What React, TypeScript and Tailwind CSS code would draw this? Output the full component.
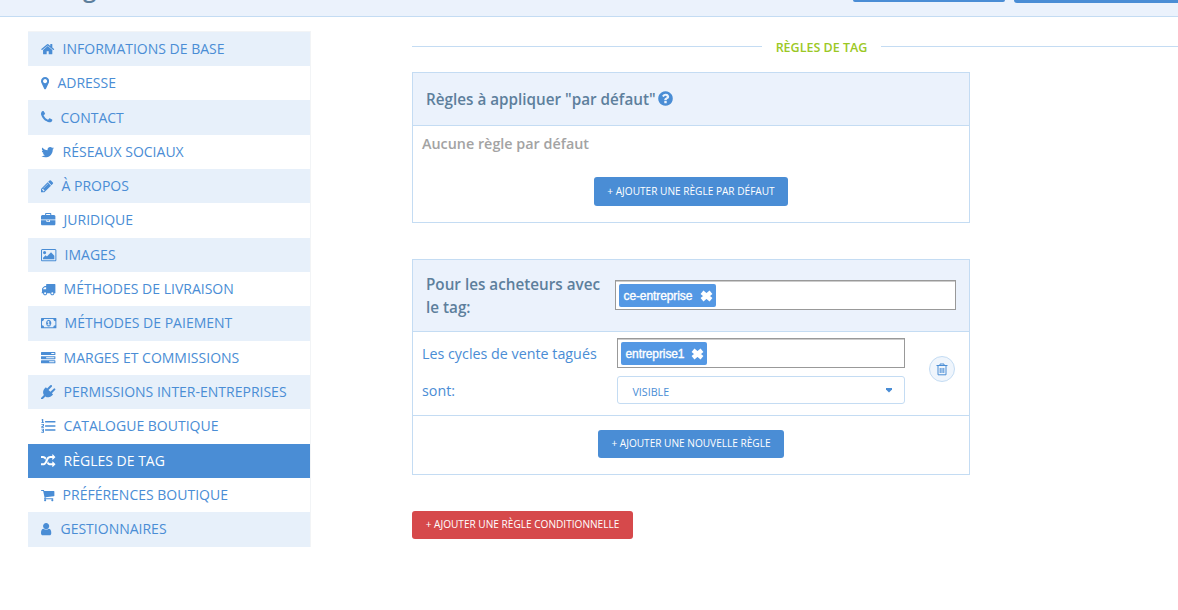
import type { ReactNode } from 'react';

type Glyph = { box: string; w: string; d: string };

// Icon outlines on a 1792-unit em, cropped to each glyph's own advance width.
const glyphs: Record<string, Glyph> = {
  home: { box: '64 0 1664 1792', w: 'w-[13.4px]', d: 'M1472 992v480q0 26-19 45t-45 19h-384v-384h-256v384h-384q-26 0-45-19t-19-45v-480q0-1 .5-3t.5-3l575-474 575 474q1 2 1 6zm223-69l-62 74q-8 9-21 11h-3q-13 0-21-7l-692-577-692 577q-12 8-24 7-13-2-21-11l-62-74q-8-10-7-23.5t11-21.5l719-599q32-26 76-26t76 26l244 204v-195q0-14 9-23t23-9h192q14 0 23 9t9 23v408l219 182q10 8 11 21.5t-7 23.5z' },
  marker: { box: '384 0 1024 1792', w: 'w-[8.2px]', d: 'M1152 640q0-106-75-181t-181-75-181 75-75 181 75 181 181 75 181-75 75-181zm256 0q0 109-33 179l-364 774q-16 33-47.5 52t-67.5 19-67.5-19-46.5-52l-365-774q-33-70-33-179 0-212 150-362t362-150 362 150 150 362z' },
  phone: { box: '192 0 1408 1792', w: 'w-[11.3px]', d: 'M1600 1240q0 27-10 70.5t-21 68.5q-21 50-122 106-94 51-186 51-27 0-53-3.5t-57.5-12.5-47-14.5-55.5-20.5-49-18q-98-35-175-83-127-79-264-216t-216-264q-48-77-83-175-3-9-18-49t-20.5-55.5-14.5-47-12.5-57.5-3.5-53q0-92 51-186 56-101 106-122 25-11 68.5-21t70.5-10q14 0 21 3 18 6 53 76 11 19 30 54t35 63.5 31 53.5q3 4 17.5 25t21.5 35.5 7 28.5q0 20-28.5 50t-62 55-62 53-28.5 46q0 9 5 22.5t8.5 20.5 14 24 11.5 19q76 137 174 235t235 174q2 1 19 11.5t24 14 20.5 8.5 22.5 5q18 0 46-28.5t53-62 55-62 50-28.5q14 0 28.5 7t35.5 21.5 25 17.5q25 15 53.5 31t63.5 35 54 30q70 35 76 53 3 7 3 21z' },
  twitter: { box: '64 0 1664 1792', w: 'w-[13.4px]', d: 'M1684 408q-67 98-162 167 1 14 1 42 0 130-38 259.5t-115.5 248.5-184.5 210.5-258 146-323 54.5q-271 0-496-145 35 4 78 4 225 0 401-138-105-2-188-64.5t-114-159.5q33 5 61 5 43 0 85-11-112-23-185.5-111.5t-73.5-205.5v-4q68 38 146 41-66-44-105-115t-39-154q0-88 44-163 121 149 294.5 238.5t371.5 99.5q-8-38-8-74 0-134 94.5-228.5t228.5-94.5q140 0 236 102 109-21 205-78-37 115-142 178 93-10 186-50z' },
  pencil: { box: '128 0 1536 1792', w: 'w-[12.3px]', d: 'M491 1536l91-91-235-235-91 91v107h128v128h107zm523-928q0-22-22-22-10 0-17 7l-542 542q-7 7-7 17 0 22 22 22 10 0 17-7l542-542q7-7 7-17zm-54-192l416 416-832 832h-416v-416zm683 96q0 53-37 90l-166 166-416-416 166-165q36-38 90-38 53 0 91 38l235 234q37 39 37 91z' },
  briefcase: { box: '0 0 1792 1792', w: 'w-[14.4px]', d: 'M640 256h512v-128h-512v128zm1152 640v480q0 66-47 113t-113 47h-1472q-66 0-113-47t-47-113v-480h672v160q0 26 19 45t45 19h320q26 0 45-19t19-45v-160h672zm-768 0v128h-256v-128h256zm768-480v384h-1792v-384q0-66 47-113t113-47h352v-160q0-40 28-68t68-28h576q40 0 68 28t28 68v160h352q66 0 113 47t47 113z' },
  image: { box: '-64 0 1920 1792', w: 'w-[15.4px]', d: 'M576 576q0 80-56 136t-136 56-136-56-56-136 56-136 136-56 136 56 56 136zm1024 384v448h-1408v-192l320-320 160 160 512-512zm96-704h-1600q-13 0-22.5 9.5t-9.5 22.5v1216q0 13 9.5 22.5t22.5 9.5h1600q13 0 22.5-9.5t9.5-22.5v-1216q0-13-9.5-22.5t-22.5-9.5zm160 32v1216q0 66-47 113t-113 47h-1600q-66 0-113-47t-47-113v-1216q0-66 47-113t113-47h1600q66 0 113 47t47 113z' },
  truck: { box: '0 0 1792 1792', w: 'w-[14.4px]', d: 'M640 1408q0-52-38-90t-90-38-90 38-38 90 38 90 90 38 90-38 38-90zm-384-512h384v-256h-158q-13 0-22 9l-195 195q-9 9-9 22v30zm1280 512q0-52-38-90t-90-38-90 38-38 90 38 90 90 38 90-38 38-90zm256-1088v1024q0 15-4 26.5t-13.5 18.5-16.5 11.5-23.5 6-22.5 2-25.5 0-22.5-.5q0 106-75 181t-181 75-181-75-75-181h-384q0 106-75 181t-181 75-181-75-75-181h-64q-3 0-22.5.5t-25.5 0-22.5-2-23.5-6-16.5-11.5-13.5-18.5-4-26.5q0-26 19-45t45-19v-320q0-8-.5-35t0-38 2.5-34.5 6.5-37 14-30.5 22.5-30l198-198q19-19 50.5-32t58.5-13h160v-192q0-26 19-45t45-19h1024q26 0 45 19t19 45z' },
  money: { box: '0 0 1920 1792', w: 'w-[15.4px]', d: 'M768 1152h384v-96h-128v-448h-114l-148 137 77 80q42-37 55-57h2v288h-128v96zm512-256q0 70-21 142t-59.5 134-101.5 101-138 39-138-39-101.5-101-59.5-134-21-142 21-142 59.5-134 101.5-101 138-39 138 39 101.5 101 59.5 134 21 142zm512 256v-512q-106 0-181-75t-75-181h-1152q0 106-75 181t-181 75v512q106 0 181 75t75 181h1152q0-106 75-181t181-75zm128-832v1152q0 26-19 45t-45 19h-1792q-26 0-45-19t-19-45v-1152q0-26 19-45t45-19h1792q26 0 45 19t19 45z' },
  tasks: { box: '0 0 1792 1792', w: 'w-[14.4px]', d: 'M1024 1408h640v-128h-640v128zm-384-512h1024v-128h-1024v128zm640-512h384v-128h-384v128zm512 832v256q0 26-19 45t-45 19h-1664q-26 0-45-19t-19-45v-256q0-26 19-45t45-19h1664q26 0 45 19t19 45zm0-512v256q0 26-19 45t-45 19h-1664q-26 0-45-19t-19-45v-256q0-26 19-45t45-19h1664q26 0 45 19t19 45zm0-512v256q0 26-19 45t-45 19h-1664q-26 0-45-19t-19-45v-256q0-26 19-45t45-19h1664q26 0 45 19t19 45z' },
  plug: { box: '0 0 1792 1792', w: 'w-[14.4px]', d: 'M1755 453q37 38 37 90.5t-37 90.5l-401 400 150 150-160 160q-163 163-389.5 186.5t-411.5-100.5l-362 362h-181v-181l362-362q-124-185-100.5-411.5t186.5-389.5l160-160 150 150 400-401q38-37 91-37t90 37 37 90.5-37 90.5l-400 401 234 234 401-400q38-37 91-37t90 37z' },
  list: { box: '0 0 1792 1792', w: 'w-[14.4px]', d: 'M512 256h1280v192h-1280zM512 768h1280v192h-1280zM512 1280h1280v192h-1280zM60 90l100-90h120v400h90v100h-330v-100h90v-240l-50 40zM40 620h330v270l-180 100h180v110h-340v-170l210-130v-80h-200zM40 1200h330v500h-330v-100h200v-100h-130v-100h130v-100h-200z' },
  random: { box: '0 0 1792 1792', w: 'w-[14.4px]', d: 'M666 481q-60 92-137 273-22-45-37-72.5t-40.5-63.5-51-56.5-63-35-81.5-14.5h-224q-14 0-23-9t-9-23v-192q0-14 9-23t23-9h224q250 0 410 225zm1126 799q0 14-9 23l-320 320q-9 9-23 9-13 0-22.5-9.5t-9.5-22.5v-192q-32 0-85 .5t-81 1-73-1-71-5-64-10.5-63-18.5-58-28.5-59-40-55-53.5-56-69.5q59-93 136-273 22 45 37 72.5t40.5 63.5 51 56.5 63 35 81.5 14.5h256v-192q0-14 9-23t23-9q12 0 24 10l319 319q9 9 9 23zm0-896q0 14-9 23l-320 320q-9 9-23 9-13 0-22.5-9.5t-9.5-22.5v-192h-256q-48 0-87 15t-69 45-51 61.5-45 77.5q-32 62-78 171-29 66-49.5 111t-54 105-64 100-74 83-90 68.5-106.5 42-128 16.5h-224q-14 0-23-9t-9-23v-192q0-14 9-23t23-9h224q48 0 87-15t69-45 51-61.5 45-77.5q32-62 78-171 29-66 49.5-111t54-105 64-100 74-83 90-68.5 106.5-42 128-16.5h256v-192q0-14 9-23t23-9q12 0 24 10l319 319q9 9 9 23z' },
  cart: { box: '64 0 1664 1792', w: 'w-[13.4px]', d: 'M704 1536q0 52-38 90t-90 38-90-38-38-90 38-90 90-38 90 38 38 90zm896 0q0 52-38 90t-90 38-90-38-38-90 38-90 90-38 90 38 38 90zm128-1088v512q0 24-16.5 42.5t-40.5 21.5l-1044 122q13 60 13 70 0 16-24 64h920q26 0 45 19t19 45-19 45-45 19h-1024q-26 0-45-19t-19-45q0-11 8-31.5t16-36 21.5-40 15.5-29.5l-177-823h-204q-26 0-45-19t-19-45 19-45 45-19h256q16 0 28.5 6.5t19.5 15.5 13 24.5 8 26 5.5 29.5 4.5 26h1201q26 0 45 19t19 45z' },
  user: { box: '256 0 1408 1792', w: 'w-[11.3px]', d: 'M1536 1399q0 109-62.5 187t-150.5 78h-854q-88 0-150.5-78t-62.5-187q0-85 8.5-160.5t31.5-152 58.5-131 94-89 134.5-34.5q131 128 313 128t313-128q76 0 134.5 34.5t94 89 58.5 131 31.5 152 8.5 160.5zm-256-887q0 159-112.5 271.5t-271.5 112.5-271.5-112.5-112.5-271.5 112.5-271.5 271.5-112.5 271.5 112.5 112.5 271.5z' },
  help: { box: '128 0 1536 1792', w: 'w-[15px]', d: 'M1024 1376v-192q0-14-9-23t-23-9h-192q-14 0-23 9t-9 23v192q0 14 9 23t23 9h192q14 0 23-9t9-23zm256-672q0-88-55.5-163t-138.5-116-170-41q-243 0-371 213-15 24 8 42l132 100q7 6 19 6 16 0 25-12 53-68 86-92 34-24 86-24 48 0 85.5 26t37.5 59q0 38-20 61t-68 45q-63 28-115.5 86.5t-52.5 125.5v36q0 14 9 23t23 9h192q14 0 23-9t9-23q0-19 21.5-49.5t54.5-49.5q32-18 49-28.5t46-35 44.5-48 28-60.5 12.5-81zm384 192q0 209-103 385.5t-279.5 279.5-385.5 103-385.5-103-279.5-279.5-103-385.5 103-385.5 279.5-279.5 385.5-103 385.5 103 279.5 279.5 103 385.5z' },
};

function Icon({ name, size = 'h-[14.4px]' }: { name: string; size?: string }) {
  const g = glyphs[name];
  return (
    <svg viewBox={g.box} className={`${size} ${g.w} shrink-0`} fill="currentColor" aria-hidden="true">
      <path d={g.d} />
    </svg>
  );
}

const menu = [
  ['home', 'INFORMATIONS DE BASE'],
  ['marker', 'ADRESSE'],
  ['phone', 'CONTACT'],
  ['twitter', 'RÉSEAUX SOCIAUX'],
  ['pencil', 'À PROPOS'],
  ['briefcase', 'JURIDIQUE'],
  ['image', 'IMAGES'],
  ['truck', 'MÉTHODES DE LIVRAISON'],
  ['money', 'MÉTHODES DE PAIEMENT'],
  ['tasks', 'MARGES ET COMMISSIONS'],
  ['plug', 'PERMISSIONS INTER-ENTREPRISES'],
  ['list', 'CATALOGUE BOUTIQUE'],
  ['random', 'RÈGLES DE TAG'],
  ['cart', 'PRÉFÉRENCES BOUTIQUE'],
  ['user', 'GESTIONNAIRES'],
];

function Sidebar() {
  return (
    <nav className="mt-[13.7px] ml-7 h-[516px] w-[283px] shrink-0 border-t border-r border-[#f2f4f6]">
      {menu.map(([icon, label], i) => {
        const tone =
          label === 'RÈGLES DE TAG' ? 'bg-[#4a8dd5] text-white' : i % 2 === 0 ? 'bg-[#e7f0fa] text-[#4a8dd5]' : 'text-[#4a8dd5]';
        return (
          <a key={label} className={`flex h-[34.33px] items-center gap-[7.9px] pb-px pl-[13.3px] text-[14px] whitespace-nowrap ${tone}`}>
            <span className="flex pt-px"><Icon name={icon} /></span>
            <span>{label}</span>
          </a>
        );
      })}
    </nav>
  );
}

function Button({ children, className }: { children: ReactNode; className: string }) {
  return (
    <button className={`flex items-center justify-center rounded-[3px] text-[10.1px] font-medium whitespace-nowrap text-white ${className}`}>
      {children}
    </button>
  );
}

function TagField({ tag, className, tagClass }: { tag: string; className: string; tagClass: string }) {
  return (
    <div className={`flex h-[30px] items-center border border-[#999] bg-white pl-[3px] shadow-[inset_0_1px_0_#ccc] ${className}`}>
      <span className={`mt-px flex h-[23px] items-center justify-between rounded-[2px] bg-[#5498e4] pr-[3px] pl-[4.5px] text-white ${tagClass}`}>
        <span className="pt-px font-['Liberation_Sans',Arial,sans-serif] text-[12px] tracking-[-0.1px] [-webkit-text-stroke:0.35px_white]">{tag}</span>
        <svg viewBox="0 0 13 12" className="h-3 w-[13px]" aria-hidden="true">
          <path d="M2 2.2L11 9.8M11 2.2L2 9.8" stroke="currentColor" strokeWidth="4.4" />
        </svg>
      </span>
    </div>
  );
}

export default function App() {
  return (
    <div className="h-[610px] w-[1178px] overflow-hidden bg-white font-['Open_Sans',sans-serif]">
      <header className="flex h-[17px] items-start overflow-hidden border-b border-[#c4dcf3] bg-[#ebf2fc] text-[#5d7f9c]">
        <span className="-mt-[25px] ml-[83px] w-[770px] shrink-0 text-[24px] leading-[26px] font-semibold">g</span>
        <div className="h-[2px] w-[152px] shrink-0 rounded-b-[3px] bg-[#4a8dd5]" />
        <div className="ml-[9px] h-[3px] w-[173px] shrink-0 rounded-bl-[3px] bg-[#4a8dd5]" />
      </header>
      <div className="flex">
        <Sidebar />
        <main className="ml-[101px] w-[766px] shrink-0">
          <div className="mt-[19px] flex h-5 items-center">
            <div className="h-px w-[350px] bg-[#c4dcf3]" />
            <h2 className="w-[119px] pt-[3px] text-center text-[12.5px] leading-5 font-semibold text-[#9bc824]">RÈGLES DE TAG</h2>
            <div className="h-px flex-1 bg-[#c4dcf3]" />
          </div>

          <section className="mt-4 h-[151px] w-[558px] border border-[#c4dcf3]">
            <div className="flex h-[53px] items-center gap-[2.5px] border-b border-[#c4dcf3] bg-[#ebf2fc] pl-[13px] text-[15.25px] font-semibold text-[#5d7f9c]">
              <span>Règles à appliquer "par défaut"</span>
              <span className="flex pb-px text-[#4a8dd5]"><Icon name="help" size="h-[17px]" /></span>
            </div>
            <p className="pt-[6px] pl-[9px] text-[14.35px] leading-[23px] font-semibold text-[#a3a3a3]">Aucune règle par défaut</p>
            <Button className="mx-auto mt-[22px] h-[29px] w-[194px] bg-[#4a8dd5]">+ AJOUTER UNE RÈGLE PAR DÉFAUT</Button>
          </section>

          <section className="mt-9 h-[216px] w-[558px] border border-[#c4dcf3]">
            <div className="flex h-[72px] items-center border-b border-[#c4dcf3] bg-[#ebf2fc] pb-px pl-[13px]">
              <div className="w-[189px] pt-[2px] text-[15.25px] leading-[23px] font-semibold whitespace-nowrap text-[#5d7f9c]">
                Pour les acheteurs avec<br />le tag:
              </div>
              <TagField tag="ce-entreprise" className="w-[341px]" tagClass="w-[97px]" />
            </div>
            <div className="flex h-[84px] border-b border-[#c4dcf3] pl-[9px]">
              <div className="w-[195px] pt-[3px] text-[14.3px] leading-[37px] text-[#4a8dd5]">
                Les cycles de vente tagués<br />sont:
              </div>
              <div className="w-[288px] pt-[6px]">
                <TagField tag="entreprise1" className="w-[288px]" tagClass="w-[86px]" />
                <div className="mt-2 flex h-7 items-center justify-between rounded-[3px] border border-[#c4dcf3] pr-[11px] pl-[14.5px] text-[10.7px] text-[#4a8dd5]">
                  <span className="pt-1">VISIBLE</span>
                  <svg viewBox="0 0 8 5" className="h-[5px] w-2" fill="currentColor" aria-hidden="true"><path d="M1 0H7V1.5L4 4.5L1 1.5z" /></svg>
                </div>
              </div>
              <button className="mt-6 ml-6 flex size-[26px] items-center justify-center rounded-full border border-[#c4dcf3] bg-[#eff5fc] text-[#4a8dd5]">
                <svg viewBox="0 0 12 13" className="h-[13px] w-3" fill="none" stroke="currentColor" aria-hidden="true">
                  <path d="M.5 2.5h11M4 2.5V1h4v1.5M2 2.5v9.3h8V2.5M4.2 5v5M6 5v5M7.8 5v5" />
                </svg>
              </button>
            </div>
            <Button className="mx-auto mt-[14px] h-7 w-[186px] bg-[#4a8dd5]">+ AJOUTER UNE NOUVELLE RÈGLE</Button>
          </section>

          <Button className="mt-9 h-7 w-[221px] bg-[#d6494b]">+ AJOUTER UNE RÈGLE CONDITIONNELLE</Button>
        </main>
      </div>
    </div>
  );
}
